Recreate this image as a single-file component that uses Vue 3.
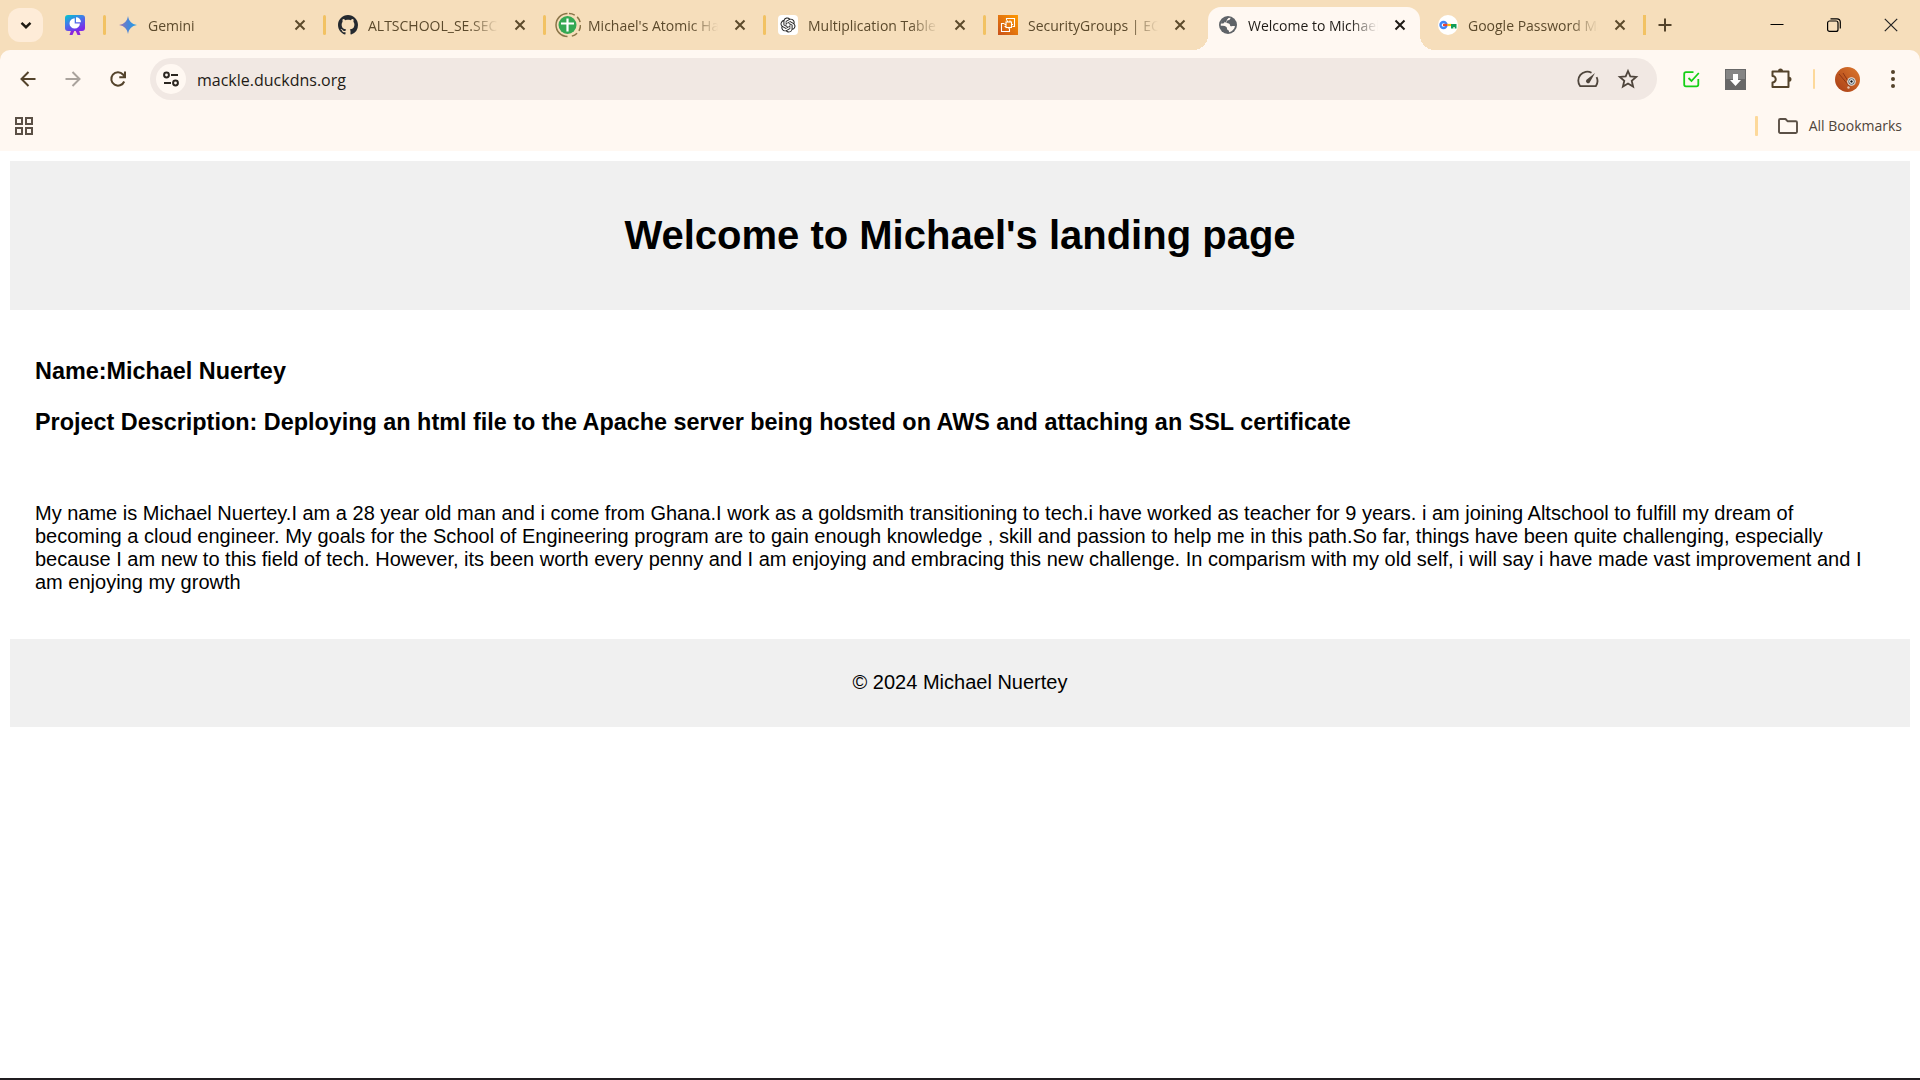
<script setup>
import { ref } from 'vue'

const address = ref('mackle.duckdns.org')

const tabs = [
  { icon: 'gemini', title: 'Gemini' },
  { icon: 'github', title: 'ALTSCHOOL_SE.SECOND' },
  { icon: 'habits', title: "Michael's Atomic Habits" },
  { icon: 'gpt', title: 'Multiplication Table G' },
  { icon: 'aws', title: 'SecurityGroups | EC2 |' },
  { icon: 'globe', title: 'Welcome to Michael', active: true },
  { icon: 'key', title: 'Google Password Manager' },
]
</script>

<template>
  <div class="window">
    <nav class="tab-strip" aria-label="Tabs">
      <button class="search-tabs" aria-label="Search tabs">
        <svg width="20" height="20" viewBox="0 0 20 20" fill="none" stroke="#1f1a12" stroke-width="2.4"><path d="M5.5 7.8 10 12.2l4.500-4.400" /></svg>
      </button>
      <button class="pinned" aria-label="Pinned tab">
        <svg width="20" height="20" viewBox="0 0 20 20">
          <defs>
            <linearGradient id="board" x1="0" y1="0" x2="0.600" y2="1"><stop offset="0" stop-color="#00c9cc" /><stop offset="0.450" stop-color="#3f7ee8" /><stop offset="1" stop-color="#7d2ae8" /></linearGradient>
          </defs>
          <path d="M6.500 14 4.500 20h3l2-4.500h1l2 4.500h3l-2-6z" fill="#8a25dd" />
          <rect width="20" height="16" rx="3" fill="url(#board)" />
          <path d="M9.700 3.200a5.200 5.200 0 1 0 5.200 5.200H9.700z" fill="#fff" />
          <path d="M11 2.200v5h5a5 5 0 0 0-5-5z" fill="#fff" />
        </svg>
      </button>

      <div v-for="tab in tabs" :key="tab.icon" class="tab" :class="{ active: tab.active }">
        <svg v-if="tab.icon === 'gemini'" class="favicon" viewBox="0 0 20 20">
          <defs><linearGradient id="spark"><stop offset="0.100" stop-color="#8f76b8" /><stop offset="0.500" stop-color="#4a86d8" /><stop offset="1" stop-color="#1ba1e8" /></linearGradient></defs>
          <path d="M10 1c.8 5 3.600 8.200 9 9-5.400.8-8.200 4-9 9-.8-5-3.600-8.200-9-9 5.400-.8 8.200-4 9-9z" fill="url(#spark)" />
        </svg>
        <svg v-else-if="tab.icon === 'github'" class="favicon" viewBox="0 0 16 16" fill="#24292f">
          <path d="M8 0C3.580 0 0 3.580 0 8c0 3.540 2.290 6.530 5.470 7.590.4.070.55-.17.55-.38 0-.19-.01-.82-.01-1.490-2.010.37-2.530-.49-2.690-.94-.09-.23-.48-.94-.82-1.130-.28-.15-.68-.52-.01-.53.63-.01 1.080.58 1.230.82.72 1.210 1.870.87 2.330.66.070-.52.28-.87.51-1.070-1.780-.2-3.640-.89-3.640-3.950 0-.87.31-1.590.82-2.150-.08-.2-.36-1.020.08-2.120 0 0 .67-.21 2.200.82.64-.18 1.320-.27 2-.27s1.360.09 2 .27c1.530-1.040 2.200-.82 2.200-.82.44 1.100.16 1.920.08 2.120.51.56.82 1.270.82 2.150 0 3.070-1.870 3.750-3.650 3.950.29.25.54.73.54 1.480 0 1.070-.01 1.930-.01 2.200 0 .21.15.46.55.38A8.010 8.010 0 0 0 16 8c0-4.420-3.580-8-8-8z" />
        </svg>
        <svg v-else-if="tab.icon === 'habits'" class="favicon spill" viewBox="0 0 26 26" fill="none">
          <path d="M12.500 24.500A11.500 11.500 0 0 1 12.500 1.500" stroke="#8a7448" stroke-width="1.500" />
          <path d="M14 1.500A11.500 11.500 0 0 1 14 24.500" stroke="#8a7448" stroke-width="1.500" stroke-dasharray="6 3" />
          <circle cx="12.500" cy="13" r="9" fill="#34a853" />
          <path d="M12.500 6.500v13M6 11.500h13" stroke="#fff" stroke-width="2.200" />
        </svg>
        <svg v-else-if="tab.icon === 'gpt'" class="favicon" viewBox="0 0 20 20">
          <rect width="20" height="20" rx="4" fill="#fff" />
          <g transform="translate(2.500 2.500) scale(.625)" fill="#222">
            <path d="M22.282 9.821a5.985 5.985 0 0 0-.516-4.910 6.046 6.046 0 0 0-6.510-2.900A6.065 6.065 0 0 0 4.981 4.182a5.985 5.985 0 0 0-3.998 2.900 6.046 6.046 0 0 0 .743 7.097 5.980 5.980 0 0 0 .511 4.911 6.051 6.051 0 0 0 6.515 2.900A5.985 5.985 0 0 0 13.260 24a6.056 6.056 0 0 0 5.772-4.206 5.990 5.990 0 0 0 3.997-2.900 6.056 6.056 0 0 0-.747-7.073zM13.260 22.430a4.476 4.476 0 0 1-2.876-1.041l.142-.081 4.779-2.758a.795.795 0 0 0 .392-.681v-6.737l2.020 1.169a.071.071 0 0 1 .038.052v5.583a4.504 4.504 0 0 1-4.495 4.494zM3.600 18.304a4.471 4.471 0 0 1-.535-3.014l.142.085 4.783 2.759a.771.771 0 0 0 .780 0l5.843-3.369v2.332a.080.080 0 0 1-.033.062L9.740 19.950a4.499 4.499 0 0 1-6.140-1.646zM2.341 7.896a4.485 4.485 0 0 1 2.365-1.973V11.600a.766.766 0 0 0 .388.677l5.814 3.354-2.020 1.169a.076.076 0 0 1-.071 0l-4.830-2.787A4.504 4.504 0 0 1 2.341 7.872zm16.596 3.856-5.833-3.388L15.119 7.200a.076.076 0 0 1 .071 0l4.830 2.791a4.494 4.494 0 0 1-.677 8.105v-5.678a.790.790 0 0 0-.407-.667zm2.011-3.023-.142-.085-4.774-2.782a.776.776 0 0 0-.785 0L9.409 9.230V6.897a.066.066 0 0 1 .028-.061l4.830-2.787a4.499 4.499 0 0 1 6.680 4.660zM8.307 12.863l-2.020-1.164a.080.080 0 0 1-.038-.057V6.075a4.499 4.499 0 0 1 7.375-3.454l-.142.081-4.778 2.758a.795.795 0 0 0-.393.681zm1.097-2.366 2.602-1.500 2.607 1.500v3l-2.597 1.500-2.607-1.500z" />
          </g>
        </svg>
        <svg v-else-if="tab.icon === 'aws'" class="favicon" viewBox="0 0 20 20" fill="none" stroke="#fff" stroke-width="1.100">
          <defs><linearGradient id="ember" x1="0" y1="1" x2="1" y2="0"><stop offset="0" stop-color="#c8511b" /><stop offset="1" stop-color="#f90" /></linearGradient></defs>
          <rect width="20" height="20" fill="url(#ember)" stroke="none" />
          <rect x="8" y="7" width="5.500" height="5.500" />
          <path d="M8.500 5.500v-2h8v8h-2M6.500 8.500h-3v8h8v-3M9.500 7V5.500M12 7V5.500M8 9.500H6.500M8 11.500H6.500M13.500 9.500H15M11 12.500V14" />
        </svg>
        <svg v-else-if="tab.icon === 'globe'" class="favicon" viewBox="0 0 20 20">
          <circle cx="10" cy="10" r="9" fill="#5f6368" />
          <path d="M12.500 2.800c0 1.700-1 2.200-2.500 2.400-1.200.2-1 1.500-1.800 2.200.9.900 2.600.4 3.400 1.500.6.900.2 1.900 1.300 2.300 1.200.4 2.600-.5 4.100.1-.5 3-2.900 5.300-6 6 .2-1.200-.3-1.800-1.200-2.200-.9-.5-.7-1.500-1-2.500-.5-1.500-3.100-1.800-6-1.800-.3-3.500 2-6.800 5.500-7.800-.8 1.500-2.200 2.700-2 3.800.2 1.200 1.500.6 2-.4.500-1.100.8-3 2.200-3.500z" fill="#fff8f2" fill-rule="evenodd" />
          <path d="M2.800 8.500c.5-3 2.500-5 5-5.700l3.200-.3C9 4 8.500 5.500 7 6.500c-1 .7-1 1.700-1.800 2z" fill="#5f6368" />
        </svg>
        <svg v-else class="favicon" viewBox="0 0 20 20">
          <circle cx="10" cy="10" r="10" fill="#fff" />
          <circle cx="5.500" cy="10" r="3" fill="none" stroke="#4285f4" stroke-width="2.400" />
          <path d="M5 8.900h4.500v2.200H5z" fill="#ea4335" />
          <path d="M9.500 8.900h4v2.200h-4z" fill="#fbbc04" />
          <path d="M13 8.900h5.500v4.600h-1.800V12h-1.300v1.500H13z" fill="#0f9d58" />
        </svg>
        <span class="title">{{ tab.title }}</span>
        <button class="close" :aria-label="`Close ${tab.title}`">
          <svg width="20" height="20" viewBox="0 0 20 20" fill="none" stroke="currentColor" stroke-width="2"><path d="m5.500 5.500 9 9m0-9-9 9" /></svg>
        </button>
      </div>

      <button class="new-tab" aria-label="New tab">
        <svg width="20" height="20" viewBox="0 0 20 20" fill="none" stroke="#54432b" stroke-width="2"><path d="M10 3.500v13M3.500 10h13" /></svg>
      </button>

      <div class="window-controls">
        <button aria-label="Minimize"><svg width="14" height="14" viewBox="0 0 14 14" stroke="#000"><path d="M.5 6.500h13" /></svg></button>
        <button aria-label="Restore">
          <svg width="14" height="14" viewBox="0 0 14 14" fill="none" stroke="#000" stroke-width="1.200"><rect x=".6" y="3" width="10.400" height="10.400" rx="2" /><path d="M3.500.8H10A3.300 3.300 0 0 1 13.300 4v6.500" /></svg>
        </button>
        <button aria-label="Close"><svg width="14" height="14" viewBox="0 0 14 14" stroke="#222" stroke-width="1.200"><path d="m.8.8 12.400 12.400m0-12.400L.8 13.200" /></svg></button>
      </div>
    </nav>

    <div class="chrome">
      <div class="toolbar">
        <div class="navigation">
          <button aria-label="Back"><svg width="20" height="20" viewBox="0 0 20 20" fill="none" stroke="#54432b" stroke-width="2"><path d="M17.500 10H4m6.500-7L3.500 10l7 7" /></svg></button>
          <button aria-label="Forward"><svg width="20" height="20" viewBox="0 0 20 20" fill="none" stroke="#aaa39d" stroke-width="2"><path d="M2.500 10H16M9.500 3l7 7-7 7" /></svg></button>
          <button aria-label="Reload"><svg width="20" height="20" viewBox="0 0 20 20" fill="none" stroke="#54432b" stroke-width="2"><path d="M16.200 12.500A6.700 6.700 0 1 1 15 5.500l1.500 1.700M17 2.500v5.700h-5.700" /></svg></button>
        </div>

        <form class="omnibox" @submit.prevent>
          <button type="button" class="site-info" aria-label="View site information">
            <svg width="20" height="20" viewBox="0 0 20 20" fill="none" stroke="#2b2620" stroke-width="2"><circle cx="5.500" cy="6" r="2.400" /><path d="M10 6h7M3 14h7" /><circle cx="14.500" cy="14" r="2.400" /></svg>
          </button>
          <input v-model="address" type="text" aria-label="Address" spellcheck="false" />
          <button type="button" class="action" aria-label="Performance">
            <svg width="22" height="22" viewBox="0 0 22 22" fill="none" stroke="#4f453c" stroke-width="1.800"><path d="M14.500 4.700a9 9 0 0 0-11.300 13.500h15.600a9 9 0 0 0 .8-9" /><path d="m18 5-5.300 9.500a2 2 0 0 1-3.200-2.700z" fill="#4f453c" stroke="none" /></svg>
          </button>
          <button type="button" class="action" aria-label="Bookmark this page">
            <svg width="22" height="22" viewBox="0 0 22 22" fill="none" stroke="#4f453c" stroke-width="1.800"><path d="m11 3 2.300 5.400 5.900.5-4.500 3.900 1.400 5.800-5.100-3.100-5.100 3.100 1.400-5.800-4.500-3.900 5.900-.5z" /></svg>
          </button>
        </form>

        <div class="extensions">
          <button aria-label="Tasks extension">
            <svg width="20" height="20" viewBox="0 0 20 20" fill="none" stroke="#16d016" stroke-width="1.800"><path d="M12.500 3.200H5A1.800 1.800 0 0 0 3.200 5v10.500A1.800 1.800 0 0 0 5 17.300h10.500a1.800 1.800 0 0 0 1.800-1.800V10M7.500 9l3 3 7.300-8" /></svg>
          </button>
          <button aria-label="Download extension">
            <svg width="21" height="21" viewBox="0 0 21 21"><rect width="21" height="21" fill="#686868" /><path d="M1 1h19v9H1z" fill="#858585" /><path d="M8 5h5v6h3l-5.500 6L5 11h3z" fill="#fff" /></svg>
          </button>
          <button aria-label="Extensions">
            <svg width="22" height="22" viewBox="0 0 22 22"><path d="M2.500 3.500h16v15.500h-16v-4.500a3.200 3.200 0 0 0 0-6.500z" fill="none" stroke="#54432b" stroke-width="2" stroke-linejoin="round" /><path d="M8 3a2.500 2.500 0 0 1 5 0zM19 8.700a2.500 2.500 0 0 1 0 5z" fill="#54432b" /></svg>
          </button>
        </div>
        <span class="divider"></span>
        <div class="profile">
          <button aria-label="Profile">
            <svg width="25" height="25" viewBox="0 0 25 25">
              <defs><linearGradient id="face" x1="1" y1="0" x2="0" y2="1"><stop offset="0" stop-color="#dd792d" /><stop offset="1" stop-color="#a83d16" /></linearGradient></defs>
              <circle cx="12.500" cy="12.500" r="12.500" fill="url(#face)" />
              <path d="m4 7 11 13M8 6l5 8" stroke="#8f3513" fill="none" />
              <circle cx="16.500" cy="14.500" r="4.300" fill="#e9e4de" /><circle cx="16.500" cy="14.500" r="3.200" fill="#666d70" /><circle cx="16.500" cy="14.500" r="2.200" fill="#fff" /><circle cx="16.500" cy="14.500" r="1.200" fill="#111" />
              <circle cx="13.500" cy="20.500" r="1.200" fill="#e8c4ad" />
            </svg>
          </button>
          <button aria-label="Menu"><svg width="20" height="20" viewBox="0 0 20 20" fill="#54432b"><circle cx="10" cy="3" r="2" /><circle cx="10" cy="10" r="2" /><circle cx="10" cy="17" r="2" /></svg></button>
        </div>
      </div>

      <div class="bookmarks">
        <button class="apps" aria-label="Apps">
          <svg width="18" height="18" viewBox="0 0 18 18" fill="none" stroke="#5b5046" stroke-width="2"><path d="M1 1h6v6H1zM11 1h6v6h-6zM1 11h6v6H1zM11 11h6v6h-6z" /></svg>
        </button>
        <span class="divider"></span>
        <button class="all-bookmarks">
          <svg width="20" height="20" viewBox="0 0 20 20" fill="none" stroke="#5b5046" stroke-width="1.900" stroke-linejoin="round"><path d="M1 4.200C1 3.500 1.500 3 2.200 3h5.300l2 2.200h8.300c.7 0 1.200.5 1.200 1.200v9.400c0 .7-.5 1.200-1.200 1.200H2.200C1.500 17 1 16.500 1 15.800z" /></svg>
          All Bookmarks
        </button>
      </div>
    </div>

    <div class="page">
      <header class="band hero">
        <h1>Welcome to Michael's landing page</h1>
      </header>
      <main>
        <h3>Name:Michael Nuertey</h3>
        <h3>Project Description: Deploying an html file to the Apache server being hosted on AWS and attaching an SSL certificate</h3>
        <br />
        <p>
          My name is Michael Nuertey.I am a 28 year old man and i come from Ghana.I work as a goldsmith transitioning to tech.i have worked as teacher for 9 years. i am joining Altschool to fulfill my dream of becoming a cloud engineer. My goals for the School of Engineering program are to gain enough knowledge , skill and passion to help me in this path.So far, things have been quite challenging, especially because I am new to this field of tech. However, its been worth every penny and I am enjoying and embracing this new challenge. In comparism with my old self, i will say i have made vast improvement and I am enjoying my growth
        </p>
      </main>
      <footer class="band">
        <p>© 2024 Michael Nuertey</p>
      </footer>
    </div>
  </div>
</template>

<style>
body {
  margin: 0;
  background: #fff;
}
</style>

<style scoped>
.window {
  display: flex;
  flex-direction: column;
  box-sizing: border-box;
  min-height: 100vh;
  border-bottom: 2px solid #201d20;
  background: #f6debb;
  font-family: "Open Sans", "Noto Sans", sans-serif;
  font-size: 14px;
}

button {
  display: flex;
  align-items: center;
  justify-content: center;
  flex: none;
  padding: 0;
  border: 0;
  background: none;
  color: inherit;
  font: inherit;
}

svg {
  display: block;
  flex: none;
}

/* Tab strip */
.tab-strip {
  display: flex;
  align-items: center;
  height: 50px;
  padding: 0 1px 0 8px;
  color: #5c4a2c;
}

.search-tabs {
  width: 35px;
  height: 34px;
  border-radius: 12px;
  background: #feecd8;
}

.pinned {
  width: 20px;
  margin: 0 18px 0 22px;
}

.tab {
  position: relative;
  display: flex;
  align-items: center;
  flex: 0 1 220px;
  min-width: 0;
  height: 50px;
  box-sizing: border-box;
  padding: 0 13px 0 15px;
}

.tab::before {
  content: "";
  position: absolute;
  left: 0;
  top: 15px;
  width: 3px;
  height: 20px;
  border-radius: 2px;
  background: #f2c263;
}

.favicon {
  width: 20px;
  height: 20px;
  z-index: 1;
}

.favicon.spill {
  width: 26px;
  height: 26px;
  margin: 0 -3px;
}

.title {
  flex: 1;
  min-width: 0;
  margin: 0 12px 0 10px;
  padding-top: 2px;
  overflow: hidden;
  line-height: 20px;
  white-space: nowrap;
  z-index: 1;
  -webkit-mask-image: linear-gradient(to right, #000 calc(100% - 28px), transparent);
  mask-image: linear-gradient(to right, #000 calc(100% - 28px), transparent);
}

.close {
  width: 20px;
  height: 20px;
  z-index: 1;
}

.tab.active {
  color: #1f1b16;
}

.tab.active::before {
  left: 5px;
  right: 3px;
  top: 7px;
  width: auto;
  height: 43px;
  border-radius: 13px 13px 0 0;
  background: #fff8f2;
}

.tab.active::after {
  content: "";
  position: absolute;
  left: -10px;
  right: -12px;
  bottom: 0;
  height: 15px;
  background:
    radial-gradient(circle at 0 0, transparent 15px, #fff8f2 15px) left / 15px 15px no-repeat,
    radial-gradient(circle at 100% 0, transparent 15px, #fff8f2 15px) right / 15px 15px no-repeat;
}

.tab.active + .tab::before {
  display: none;
}

.tab:last-of-type {
  margin-right: -1px;
}

.new-tab {
  width: 40px;
  height: 20px;
  border-left: 3px solid #f2c263;
}

.window-controls {
  display: flex;
  margin-left: auto;
}

.window-controls button {
  width: 57px;
  height: 50px;
}

/* Toolbar and bookmarks */
.chrome {
  border-radius: 10px 10px 0 0;
  background: #fff8f2;
}

.toolbar {
  display: flex;
  align-items: center;
  height: 58px;
  padding: 0 10px;
}

.navigation,
.extensions,
.profile {
  display: flex;
  gap: 10px;
}

.navigation button,
.extensions button,
.profile button {
  width: 35px;
  height: 35px;
}

.omnibox {
  display: flex;
  align-items: center;
  flex: 1;
  min-width: 0;
  height: 42px;
  box-sizing: border-box;
  margin: 0 16px 0 15px;
  padding: 0 9px 0 6px;
  border-radius: 21px;
  background: #f1e8e3;
}

.site-info {
  width: 30px;
  height: 30px;
  border-radius: 50%;
  background: #fff8f2;
}

.omnibox input {
  flex: 1;
  min-width: 0;
  margin-left: 11px;
  padding: 2px 0 0;
  border: 0;
  outline: 0;
  background: none;
  color: #1f1b16;
  font: inherit;
  font-size: 16px;
  line-height: 24px;
}

.action {
  width: 40px;
  height: 40px;
}

.divider {
  flex: none;
  width: 2px;
  height: 20px;
  margin: 0 15px;
  border-radius: 1px;
  background: #fdd99b;
}

.bookmarks {
  display: flex;
  align-items: center;
  height: 35px;
  padding: 0 18px 8px 15px;
  color: #50453a;
}

.bookmarks .divider {
  width: 3px;
  margin: 0 20px 0 auto;
}

.all-bookmarks {
  gap: 11px;
  line-height: 20px;
}

/* Landing page */
.page {
  flex: 1;
  padding: 10px;
  background: #fff;
  color: #000;
  font-family: "Liberation Sans", Arial, sans-serif;
  font-size: 20px;
  line-height: 23px;
}

.band {
  padding: 12px 25px 13px;
  background: #f0f0f0;
  text-align: center;
}

.hero {
  padding: 25px;
}

h1 {
  margin: 27px 0;
  line-height: 45px;
}

main {
  padding: 25px;
}

h3 {
  margin: 1em 0;
  line-height: 27px;
}

p {
  margin: 20px 0;
}
</style>
